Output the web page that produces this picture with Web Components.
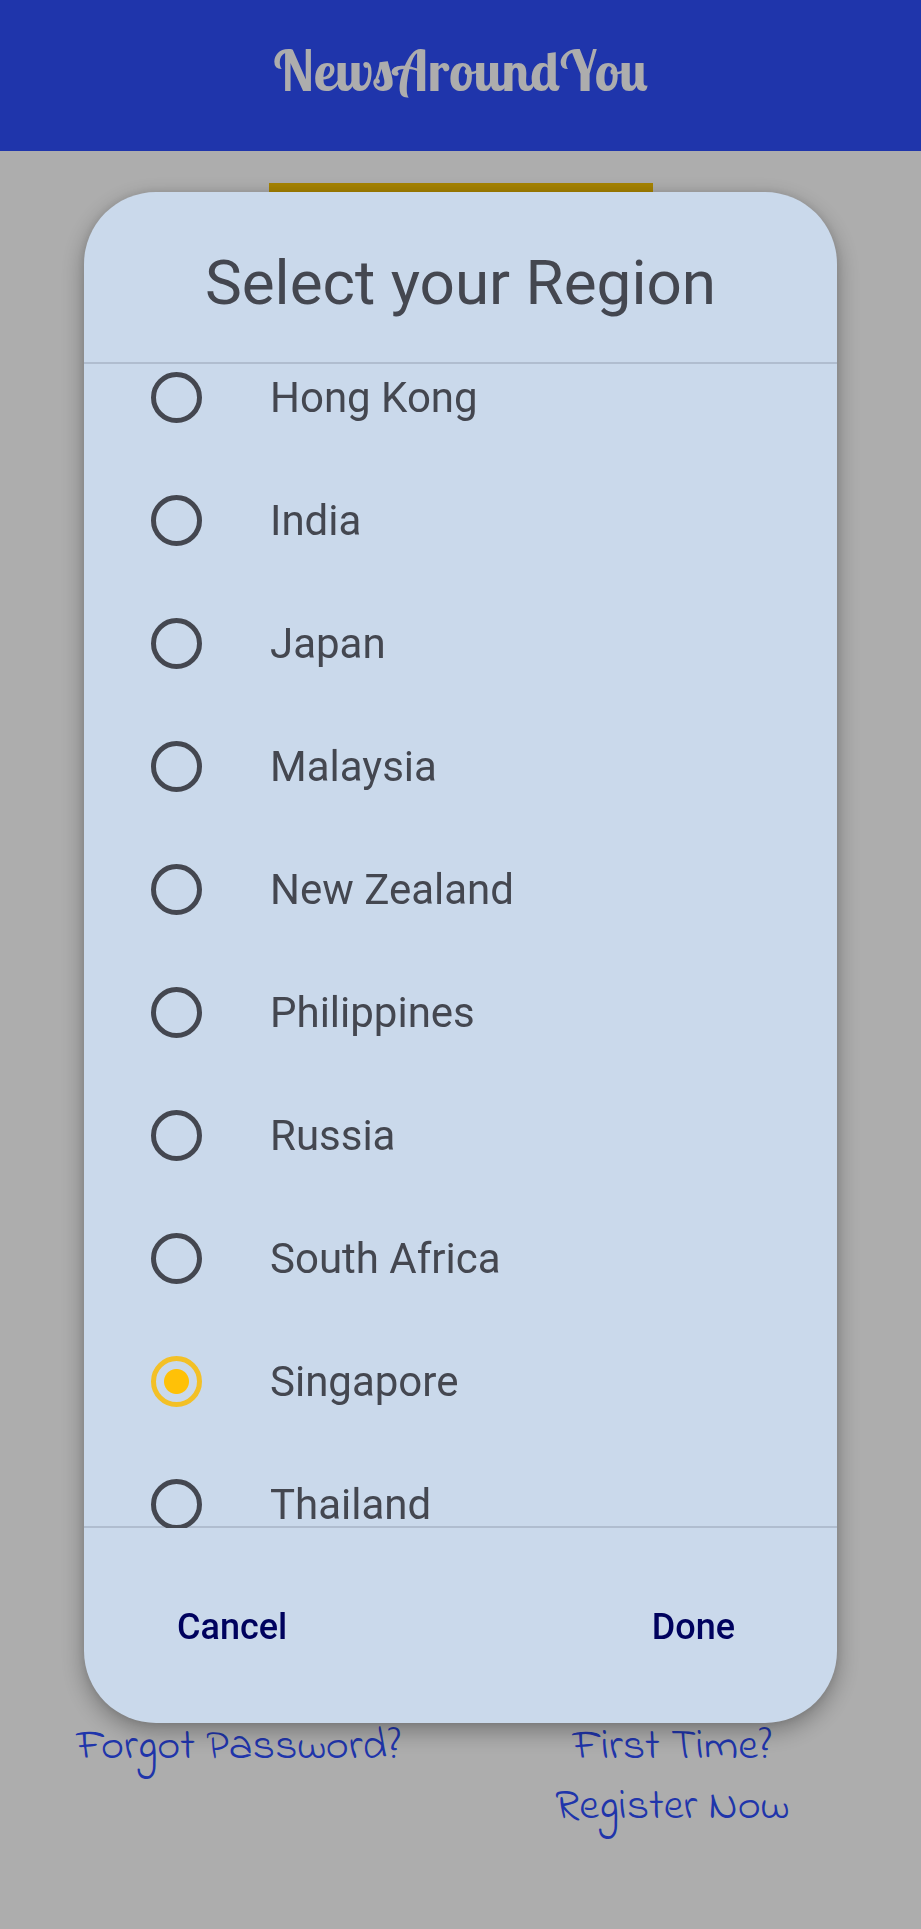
<!DOCTYPE html>
<html lang="en">
<head>
<meta charset="utf-8">
<meta name="viewport" content="width=device-width, initial-scale=1">
<title>NewsAroundYou</title>
<style>
body { margin: 0; background: #fff; font-family: Roboto, "Liberation Sans", sans-serif; }
</style>
</head>
<body>
<login-page>
  <app-bar slot="bar">NewsAroundYou</app-bar>
  <account-link slot="links" href="#forgot">Forgot Password?</account-link>
  <account-link slot="links" href="#register">First Time?<br>Register Now</account-link>
</login-page>
<modal-dialog>
  <span slot="title">Select your Region</span>
  <region-list options="Hong Kong,India,Japan,Malaysia,New Zealand,Philippines,Russia,South Africa,Singapore,Thailand" value="Singapore" offset="28"></region-list>
  <text-button slot="actions">Cancel</text-button>
  <text-button slot="actions">Done</text-button>
</modal-dialog>

<script>
const define = (name, html, setup) => customElements.define(name, class extends HTMLElement {
  connectedCallback() {
    if (this.shadowRoot) return;
    this.attachShadow({ mode: "open" }).innerHTML = html;
    if (setup) setup(this, this.shadowRoot);
  }
});

define("app-bar", `
  <style>
    :host { display: block; background: #2f4efc; color: #fff; }
    h1 { margin: 0; padding: 38px 24px 49px; text-align: center;
      font: 700 56px/64px "Lobster Two", Lobster, "Liberation Serif", serif; }
  </style>
  <header><h1><slot></slot></h1></header>`);

define("account-link", `
  <style>
    :host { display: block; text-align: center; }
    a { color: #2f4efc; text-decoration: none;
      font: 400 44px/60px "Indie Flower", Lato, sans-serif; }
  </style>
  <a><slot></slot></a>`,
  (el, root) => { root.querySelector("a").href = el.getAttribute("href"); });

define("login-page", `
  <style>
    :host { display: flex; flex-direction: column; min-height: 100vh; }
    .logo { width: 384px; max-width: 80%; height: 384px; margin: 32px auto 0; background: #f5c100; }
    nav { display: grid; grid-template-columns: 1fr 1fr; margin-top: auto; padding: 0 32px 92px 22px; }
  </style>
  <slot name="bar"></slot>
  <div class="logo"></div>
  <nav><slot name="links"></slot></nav>`);

define("modal-dialog", `
  <style>
    :host { position: fixed; inset: 0; display: flex; box-sizing: border-box;
      padding: 192px 84px 206px; background: rgba(0, 0, 0, .32); }
    section { flex: 1; min-width: 0; display: flex; flex-direction: column; overflow: hidden;
      border-radius: 72px; background: #cad9eb; color: #444750;
      box-shadow: 0 8px 24px rgba(0, 0, 0, .32), 0 0 8px rgba(0, 0, 0, .1); }
    h2 { margin: 0; padding: 51px 24px 39px; text-align: center; font-weight: 400;
      font-size: 62px; line-height: 80px; border-bottom: 2px solid #b0bdcf; }
    .body { flex: 1; min-height: 0; display: flex; }
    footer { display: flex; justify-content: space-between; align-items: center;
      padding: 75px 102px 72px 93px; }
  </style>
  <section role="dialog" aria-modal="true" aria-labelledby="t">
    <h2 id="t"><slot name="title"></slot></h2>
    <div class="body"><slot></slot></div>
    <footer><slot name="actions"></slot></footer>
  </section>`);

define("region-list", `
  <style>
    :host { display: block; flex: 1; overflow-y: auto; scrollbar-width: none;
      box-shadow: inset 0 -2px #b0bdcf; }
    label { display: flex; align-items: center; gap: 68px; height: 123px; padding-left: 67px;
      font-size: 42px; line-height: 50px; }
    input { appearance: none; flex: none; box-sizing: border-box; width: 51px; height: 51px; margin: 0;
      border: 5px solid #444750; border-radius: 50%; }
    input:checked { border-color: #f3c026;
      background: radial-gradient(circle, #ffc107 0 12px, transparent 13px); }
  </style>
  <div role="radiogroup" aria-label="Region"></div>`,
  (el, root) => {
    const group = root.querySelector("div");
    for (const name of el.getAttribute("options").split(",")) {
      const label = document.createElement("label");
      const input = document.createElement("input");
      input.type = "radio";
      input.name = "region";
      input.value = name;
      input.checked = name === el.getAttribute("value");
      const text = document.createElement("span");
      text.textContent = name;
      label.append(input, text);
      group.append(label);
    }
    el.scrollTop = Number(el.getAttribute("offset"));
  });

define("text-button", `
  <style>
    :host { display: block; }
    button { padding: 0; border: 0; background: none; color: #00025e; cursor: pointer;
      font: 500 36px/48px Roboto, "Liberation Sans", sans-serif; }
  </style>
  <button type="button"><slot></slot></button>`);
</script>
</body>
</html>
